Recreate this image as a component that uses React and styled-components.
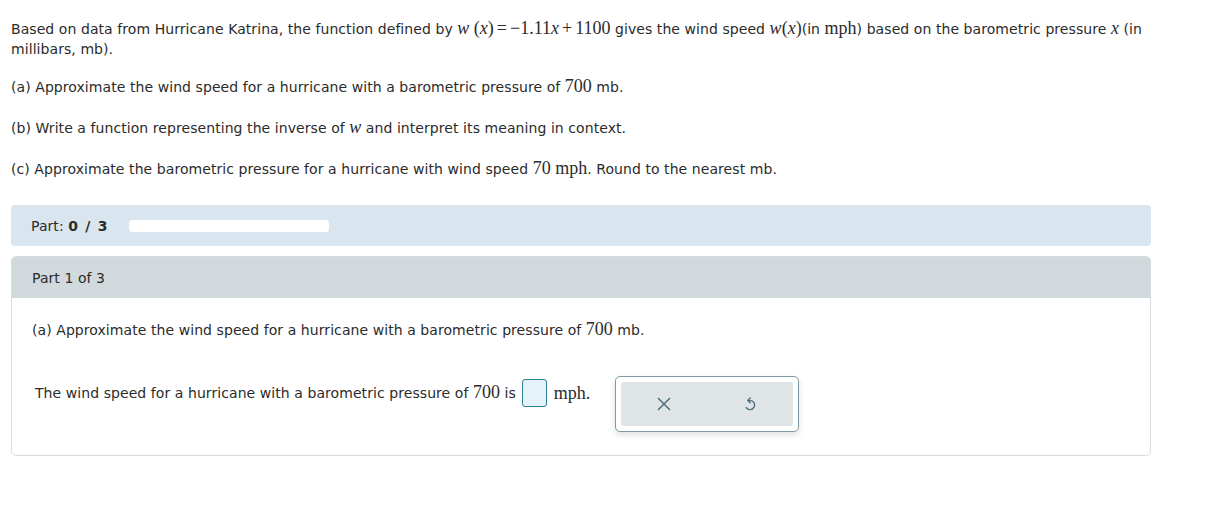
import React from "react";
import styled, { createGlobalStyle } from "styled-components";

const GlobalStyle = createGlobalStyle`
  body {
    margin: 0;
    background: #ffffff;
    font-family: "DejaVu Sans", Verdana, sans-serif;
    font-size: 14px;
    letter-spacing: 0.07px;
    color: #2b2b2b;
  }
`;

const Page = styled.div`
  padding: 19px 72px 40px 11px;
`;

const Para = styled.p`
  margin: 0 0 ${(p) => (p.$tight ? "18px" : "21px")} 0;
  line-height: 20px;
`;

const M = styled.span`
  font-family: "Liberation Serif", "Times New Roman", serif;
  font-size: 18px;
  line-height: 14px;
  letter-spacing: 0;
  font-style: ${(p) => (p.$i ? "italic" : "normal")};
`;

const Op = styled(M)`
  margin: 0 3px;
`;

const ProgressBar = styled.div`
  display: flex;
  align-items: center;
  gap: 20px;
  height: 41px;
  margin-top: 26px;
  padding: 0 20px;
  background: #d9e5ef;
  border-radius: 4px;
`;

const ProgressLabel = styled.span`
  b {
    font-weight: bold;
    letter-spacing: 1.2px;
  }
`;

const Track = styled.div`
  width: 200px;
  height: 12px;
  background: #ffffff;
  border-radius: 3px;
`;

const Card = styled.div`
  margin-top: 10px;
  border: 1px solid #d5dde1;
  border-radius: 5px;
  overflow: hidden;
`;

const CardHeader = styled.div`
  height: 41px;
  display: flex;
  align-items: center;
  padding: 0 20px;
  background: #d1d9dc;
`;

const CardBody = styled.div`
  padding: 22px 20px 23px 20px;
`;

const AnswerRow = styled.div`
  display: flex;
  align-items: flex-start;
  margin-top: 38px;
  padding-left: 3px;
`;

const Sentence = styled.div`
  display: flex;
  align-items: center;
  height: 30px;
  gap: 5px;
`;

const Blank = styled.span`
  display: inline-block;
  width: 23px;
  height: 26px;
  border: 1px solid #2a7f93;
  border-radius: 3px;
  background: #e4f3f7;
  margin: 0 2px 0 1px;
`;

const ToolBox = styled.div`
  margin-left: 25px;
  margin-top: -2px;
  padding: 5px;
  border: 1px solid #7e9aa6;
  border-radius: 5px;
  background: #ffffff;
  box-shadow: 0 3px 6px rgba(0, 0, 0, 0.12);
`;

const ToolPanel = styled.div`
  display: flex;
  align-items: center;
  justify-content: space-around;
  width: 172px;
  height: 44px;
  background: #dfe5e7;
  border-radius: 3px;
`;

const ToolButton = styled.button`
  border: none;
  background: none;
  padding: 0;
  display: flex;
  cursor: pointer;
`;

const XIcon = () => (
  <svg width="14" height="14" viewBox="0 0 14 14">
    <path d="M1.5 1.5 L12.5 12.5 M12.5 1.5 L1.5 12.5" stroke="#4d6e7a" strokeWidth="1.5" strokeLinecap="round" />
  </svg>
);

const UndoIcon = () => (
  <svg width="14" height="16" viewBox="0 0 14 16">
    <path
      d="M5.2 4.4 H7 A4.6 4.6 0 1 1 3.2 11.6"
      fill="none"
      stroke="#4d6e7a"
      strokeWidth="1.4"
      strokeLinecap="round"
    />
    <path
      d="M7.2 2 L4.8 4.4 L7.2 6.8"
      fill="none"
      stroke="#4d6e7a"
      strokeWidth="1.4"
      strokeLinecap="round"
      strokeLinejoin="round"
    />
  </svg>
);

export default function App() {
  return (
    <>
      <GlobalStyle />
      <Page>
        <Para $tight>
          Based on data from Hurricane Katrina, the function defined by{" "}
          <M $i>w</M> <M>(</M>
          <M $i>x</M>
          <M>)</M>
          <Op>=</Op>
          <M>−1.11</M>
          <M $i>x</M>
          <Op>+</Op>
          <M>1100</M> gives the wind speed <M $i>w</M>
          <M>(</M>
          <M $i>x</M>
          <M>)</M>(in <M>mph</M>) based on the barometric pressure <M $i>x</M> (in
          millibars, mb).
        </Para>
        <Para>
          (a) Approximate the wind speed for a hurricane with a barometric pressure of <M>700</M> mb.
        </Para>
        <Para>
          (b) Write a function representing the inverse of <M $i>w</M> and interpret its meaning in context.
        </Para>
        <Para>
          (c) Approximate the barometric pressure for a hurricane with wind speed <M>70</M>{" "}
          <M>mph</M>. Round to the nearest mb.
        </Para>

        <ProgressBar>
          <ProgressLabel>
            Part: <b>0 / 3</b>
          </ProgressLabel>
          <Track />
        </ProgressBar>

        <Card>
          <CardHeader>Part 1 of 3</CardHeader>
          <CardBody>
            <Para>
              (a) Approximate the wind speed for a hurricane with a barometric pressure of <M>700</M> mb.
            </Para>
            <AnswerRow>
              <Sentence>
                <span>
                  The wind speed for a hurricane with a barometric pressure of <M>700</M> is
                </span>
                <Blank />
                <M>mph.</M>
              </Sentence>
              <ToolBox>
                <ToolPanel>
                  <ToolButton aria-label="Clear">
                    <XIcon />
                  </ToolButton>
                  <ToolButton aria-label="Undo">
                    <UndoIcon />
                  </ToolButton>
                </ToolPanel>
              </ToolBox>
            </AnswerRow>
          </CardBody>
        </Card>
      </Page>
    </>
  );
}
